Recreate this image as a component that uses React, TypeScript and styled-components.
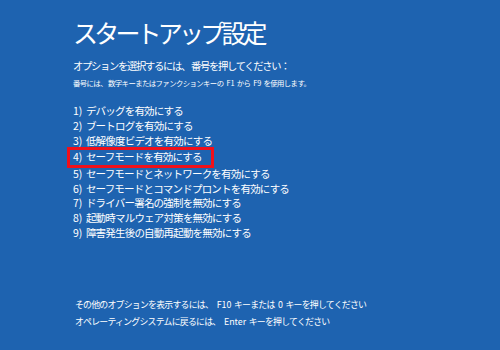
import React from "react";
import styled, { createGlobalStyle } from "styled-components";

const Global = createGlobalStyle`
  html, body { margin: 0; padding: 0; background: #1e63b0; }
  body { font-family: "Noto Sans CJK JP", "Noto Sans", sans-serif; }
`;

const Screen = styled.div`
  width: 500px;
  height: 350px;
  box-sizing: border-box;
  background: #1e63b0;
  color: #ffffff;
  padding: 15px 0 0 72px;
  display: flex;
  flex-direction: column;
  overflow: hidden;
`;

const Title = styled.h1`
  margin: 0;
  font-size: 25px;
  font-weight: 400;
  line-height: 34px;
  letter-spacing: -3.8px;
  padding-left: 1px;
`;

const Prompt = styled.p`
  margin: 9px 0 0 1px;
  font-size: 10.3px;
  line-height: 16px;
  letter-spacing: -1.3px;
  white-space: nowrap;
`;

const Note = styled.p`
  margin: 2px 0 0 1px;
  font-size: 7.4px;
  line-height: 14px;
  letter-spacing: -0.6px;
  white-space: nowrap;
`;

const NoteKey = styled.span`
  letter-spacing: 0;
  margin: 0 2px 0 3px;
`;

const List = styled.ol`
  list-style: none;
  margin: 14px 0 0 0;
  padding: 0;
  display: flex;
  flex-direction: column;
`;

const Item = styled.li<{ $selected?: boolean }>`
  font-size: 10.5px;
  line-height: 14.9px;
  letter-spacing: -0.8px;
  padding-left: 1px;
  align-self: flex-start;
  white-space: nowrap;
  ${(p) =>
    p.$selected
      ? `
    border: 3px solid #f0101a;
    margin: -1.5px 0 -1.5px -5.5px;
    padding: 0 0 0 3.5px;
    width: 147px;
    box-sizing: border-box;
  `
      : ""}
`;

const Num = styled.span`
  letter-spacing: 0;
  margin-right: 3.5px;
`;

const Footer = styled.div`
  margin-top: auto;
  margin-bottom: 20px;
  padding-left: 3px;
  display: flex;
  flex-direction: column;
`;

const FooterLine = styled.p`
  margin: 0;
  font-size: 8.9px;
  line-height: 17px;
  letter-spacing: -0.75px;
  white-space: nowrap;
`;

const Key = styled.span`
  letter-spacing: 0;
  margin: 0 2.5px 0 3.5px;
`;

const items = [
  "デバッグを有効にする",
  "ブートログを有効にする",
  "低解像度ビデオを有効にする",
  "セーフモードを有効にする",
  "セーフモードとネットワークを有効にする",
  "セーフモードとコマンドプロントを有効にする",
  "ドライバー署名の強制を無効にする",
  "起動時マルウェア対策を無効にする",
  "障害発生後の自動再起動を無効にする",
];

export default function App() {
  return (
    <>
      <Global />
      <Screen>
        <Title>スタートアップ設定</Title>
        <Prompt>オプションを選択するには、 番号を押してください：</Prompt>
        <Note>
          番号には、 数字キーまたはファンクションキーの<NoteKey>F1</NoteKey>から<NoteKey>F9</NoteKey>を使用します。
        </Note>
        <List>
          {items.map((t, i) => (
            <Item key={t} $selected={i === 3}>
              <Num>{i + 1})</Num>
              {t}
            </Item>
          ))}
        </List>
        <Footer>
          <FooterLine>
            その他のオプションを表示するには、<Key>F10</Key>キーまたは<Key>0</Key>キーを押してください
          </FooterLine>
          <FooterLine>
            オペレーティングシステムに戻るには、<Key>Enter</Key>キーを押してください
          </FooterLine>
        </Footer>
      </Screen>
    </>
  );
}
